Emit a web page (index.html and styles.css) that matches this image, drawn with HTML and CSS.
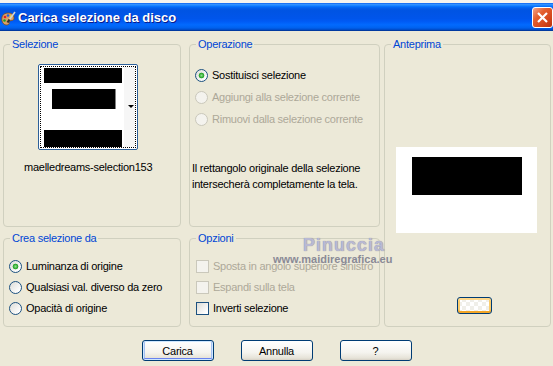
FILE: index.html
```html
<!DOCTYPE html>
<html lang="it">

<head>
  <meta charset="UTF-8">
  <meta name="viewport" content="width=device-width, initial-scale=1.0">
  <title>Carica selezione da disco</title>

  <link rel="stylesheet" href="styles.css">
</head>

<body>

  <div id="strip"></div>

  <div id="titlebar">
    <svg class="appicon" width="15" height="16" viewBox="0 0 15 16">
      <path d="M7 2C2 2 0 6 1 10C2 14 6 15 8 13C9 12 7 11 9 10C11 9 13 10 13 7C13 4 11 2 7 2Z" fill="#d9a066" stroke="#7a4a1c" stroke-width="0.8" />
      <circle cx="4" cy="6" r="1.3" fill="#e02020" />
      <circle cx="7" cy="4.5" r="1.3" fill="#2060e0" />
      <circle cx="3.5" cy="9.5" r="1.3" fill="#20a020" />
      <circle cx="10" cy="5.5" r="1.2" fill="#f0e020" />
      <path d="M14 1L8.5 8.5" stroke="#d0d0d0" stroke-width="1.6" />
      <path d="M8.5 8.5L6.5 11.5" stroke="#303030" stroke-width="2.2" />
    </svg>
    <span class="title">Carica selezione da disco</span>
    <button class="close">
      <svg width="13" height="13" viewBox="0 0 13 13">
        <path d="M2 2L11 11M11 2L2 11" stroke="#fff" stroke-width="2.2" />
      </svg>
    </button>
  </div>

  <div id="dialog">
    <div id="panels">

      <fieldset class="group sel">
        <legend>Selezione</legend>
        <div class="thumb">
          <div class="thumb-inner">
            <div class="thumb-img">
              <div class="bar top"></div>
              <div class="bar mid"></div>
              <div class="bar bottom"></div>
            </div>
            <div class="thumb-side"><span class="arrow"></span></div>
          </div>
        </div>
        <p class="filename">maelledreams-selection153</p>
      </fieldset>

      <fieldset class="group op">
        <legend>Operazione</legend>
        <div class="options">
          <label class="opt"><input type="radio" name="op" checked>Sostituisci selezione</label>
          <label class="opt off"><input type="radio" name="op" disabled>Aggiungi alla selezione corrente</label>
          <label class="opt off"><input type="radio" name="op" disabled>Rimuovi dalla selezione corrente</label>
        </div>
        <p class="note">Il rettangolo originale della selezione<br>intersecherà completamente la tela.</p>
      </fieldset>

      <fieldset class="group preview">
        <legend>Anteprima</legend>
        <div class="canvas">
          <div class="shape"></div>
        </div>
        <button class="swatch"></button>
      </fieldset>

      <fieldset class="group crea">
        <legend>Crea selezione da</legend>
        <div class="options">
          <label class="opt"><input type="radio" name="src" checked>Luminanza di origine</label>
          <label class="opt"><input type="radio" name="src">Qualsiasi val. diverso da zero</label>
          <label class="opt"><input type="radio" name="src">Opacità di origine</label>
        </div>
      </fieldset>

      <fieldset class="group opz">
        <legend>Opzioni</legend>
        <div class="options">
          <label class="opt off"><input type="checkbox" disabled>Sposta in angolo superiore sinistro</label>
          <label class="opt off"><input type="checkbox" disabled>Espandi sulla tela</label>
          <label class="opt"><input type="checkbox">Inverti selezione</label>
        </div>
      </fieldset>

    </div>

    <div id="buttons">
      <button class="btn default">Carica</button>
      <button class="btn">Annulla</button>
      <button class="btn">?</button>
    </div>
  </div>

  <div class="watermark">
    <span class="wm-name">Pinuccia</span>
    <span class="wm-url">www.maidiregrafica.eu</span>
  </div>

</body>

</html>
```

FILE: styles.css
```css
body {
  margin: 0;
  width: 553px;
  height: 366px;
  overflow: hidden;
  background-color: #ece9d8;
  font: 11px "Liberation Sans", Arial, sans-serif;
  letter-spacing: -0.25px;
  color: #000;
  position: relative;
}

#strip {
  height: 3px;
  background-color: #f4f3ee;
}

#titlebar {
  height: 28px;
  display: flex;
  align-items: center;
  padding-left: 1px;
  background: linear-gradient(to bottom, #0058ee 0%, #3593ff 4%, #288eff 7%, #127dff 10%, #036ffc 13%, #0262ee 17%, #0057e5 22%, #0054e3 28%, #0055eb 56%, #005bf5 66%, #026afe 78%, #0062ef 88%, #0052d6 94%, #0040ab 97%, #003092 100%);
}

.appicon {
  margin-top: 3px;
}

.title {
  margin-left: 2px;
  font: bold 13px "Liberation Sans", Arial, sans-serif;
  letter-spacing: 0;
  color: #fff;
  text-shadow: 1px 1px 0 #0a1b8a;
}

.close {
  margin-left: auto;
  width: 21px;
  height: 21px;
  padding: 0;
  border: 1px solid #fff;
  border-radius: 3px;
  background: linear-gradient(135deg, #f2a58c 0%, #e4602f 35%, #d4461c 70%, #b9330f 100%);
  display: flex;
  align-items: center;
  justify-content: center;
}

#dialog {
  padding-top: 7px;
}

#panels {
  display: grid;
  grid-template-columns: 3px 178px 8px 191px 4px 167px;
  grid-template-rows: 189px 95px;
  row-gap: 5px;
}

.group {
  margin: 0;
  padding: 0;
  min-width: 0;
  border: 1px solid #d0d0bf;
  border-radius: 4px;
}

.group legend {
  margin-left: 6px;
  padding: 0 2px;
  line-height: 13px;
  color: #0046d5;
}

.sel {
  grid-column: 2;
  grid-row: 1;
}

.op {
  grid-column: 4;
  grid-row: 1;
}

.preview {
  grid-column: 6;
  grid-row: 1 / span 2;
}

.crea {
  grid-column: 2;
  grid-row: 2;
}

.opz {
  grid-column: 4;
  grid-row: 2;
}

/* miniatura della selezione */
.thumb {
  width: 100px;
  height: 86px;
  box-sizing: border-box;
  margin: 13px 0 0 34px;
  border: 1px solid #2c5f99;
  border-radius: 2px;
  padding: 1px;
  background-color: #fff;
}

.thumb-inner {
  height: 100%;
  box-sizing: border-box;
  border: 1px dotted #000;
  display: flex;
  overflow: hidden;
}

.thumb-img {
  width: 83px;
  padding: 1px 0 0 3px;
  box-sizing: border-box;
}

.bar {
  background-color: #000;
}

.bar.top {
  width: 78px;
  height: 15px;
}

.bar.mid {
  width: 63px;
  height: 20px;
  margin: 6px 0 0 8px;
  box-shadow: 1px 0 0 #808080;
}

.bar.bottom {
  width: 78px;
  height: 17px;
  margin-top: 21px;
}

.thumb-side {
  flex: 1;
  background-color: #f6f6f6;
  position: relative;
}

.arrow {
  position: absolute;
  right: 1px;
  top: 38px;
  border-left: 3px solid transparent;
  border-right: 3px solid transparent;
  border-top: 3px solid #000;
}

.filename {
  margin: 10px 0 0 20px;
  line-height: 14px;
}

/* righe con radio e caselle */
.options {
  display: flex;
  flex-direction: column;
  gap: 6px;
  margin-top: 16px;
  margin-left: 5px;
}

.crea .options,
.opz .options {
  margin-top: 13px;
  gap: 5px;
}

.opz .options {
  margin-left: 6px;
}

.opt {
  display: flex;
  align-items: center;
  gap: 4px;
  height: 16px;
  white-space: nowrap;
}

.opt.off {
  color: #aca899;
}

.opt input {
  appearance: none;
  margin: 0;
  width: 13px;
  height: 13px;
  flex: none;
  border: 1px solid #1c5180;
  background: linear-gradient(135deg, #dcdcd7 0%, #fff 85%);
}

.opt input[type=radio] {
  border-radius: 50%;
}

.opt input[type=radio]:checked {
  background: radial-gradient(circle, #8de08d 0, #21a121 2.5px, transparent 3.2px), linear-gradient(135deg, #dcdcd7 0%, #fff 85%);
}

.opt input:disabled {
  border-color: #cac8bb;
  background: #f4f3ee;
}

.note {
  margin: 33px 0 0 2px;
  line-height: 16px;
}

/* anteprima */
.canvas {
  width: 141px;
  height: 86px;
  box-sizing: border-box;
  margin: 96px 0 0 11px;
  padding: 10px 0 0 16px;
  background-color: #fff;
}

.shape {
  width: 110px;
  height: 38px;
  background-color: #000;
}

.swatch {
  display: block;
  width: 35px;
  height: 17px;
  margin: 64px 0 0 72px;
  padding: 0;
  border: 1px solid #003c74;
  border-radius: 3px;
  background: repeating-conic-gradient(#f0efe9 0 25%, #fff 0 50%) 0 0 / 8px 8px;
  box-shadow: inset 0 2px 0 #ffd88a, inset 0 -2px 0 #f3a628, inset 2px 0 0 #fbcd6e, inset -2px 0 0 #fbcd6e;
}

/* pulsanti */
#buttons {
  display: flex;
  justify-content: center;
  gap: 27px;
  margin-top: 13px;
}

.btn {
  width: 72px;
  height: 21px;
  padding: 0;
  font: 11px "Liberation Sans", Arial, sans-serif;
  letter-spacing: -0.25px;
  color: #000;
  border: 1px solid #003c74;
  border-radius: 3px;
  background: linear-gradient(to bottom, #fff 0%, #f5f4ef 60%, #e6e3d8 90%, #d6d0c5 100%);
}

.btn.default {
  box-shadow: inset 0 0 0 1px #cee7ff, inset 0 -2px 0 0 #6982ee, inset 2px 0 0 #a6c1f2, inset -2px 0 0 #a6c1f2;
}

/* filigrana */
.watermark {
  position: absolute;
  left: 273px;
  top: 235px;
  display: flex;
  flex-direction: column;
}

.wm-name {
  margin-left: 30px;
  font: bold 18px "Liberation Sans", Arial, sans-serif;
  line-height: 20px;
  letter-spacing: 1px;
  color: #b9b9d3;
  text-shadow: 0 0 1px #7c7c90;
}

.wm-url {
  margin-top: -3px;
  font: bold 11px "Liberation Sans", Arial, sans-serif;
  line-height: 14px;
  letter-spacing: 0;
  color: #8a8a96;
}
```
